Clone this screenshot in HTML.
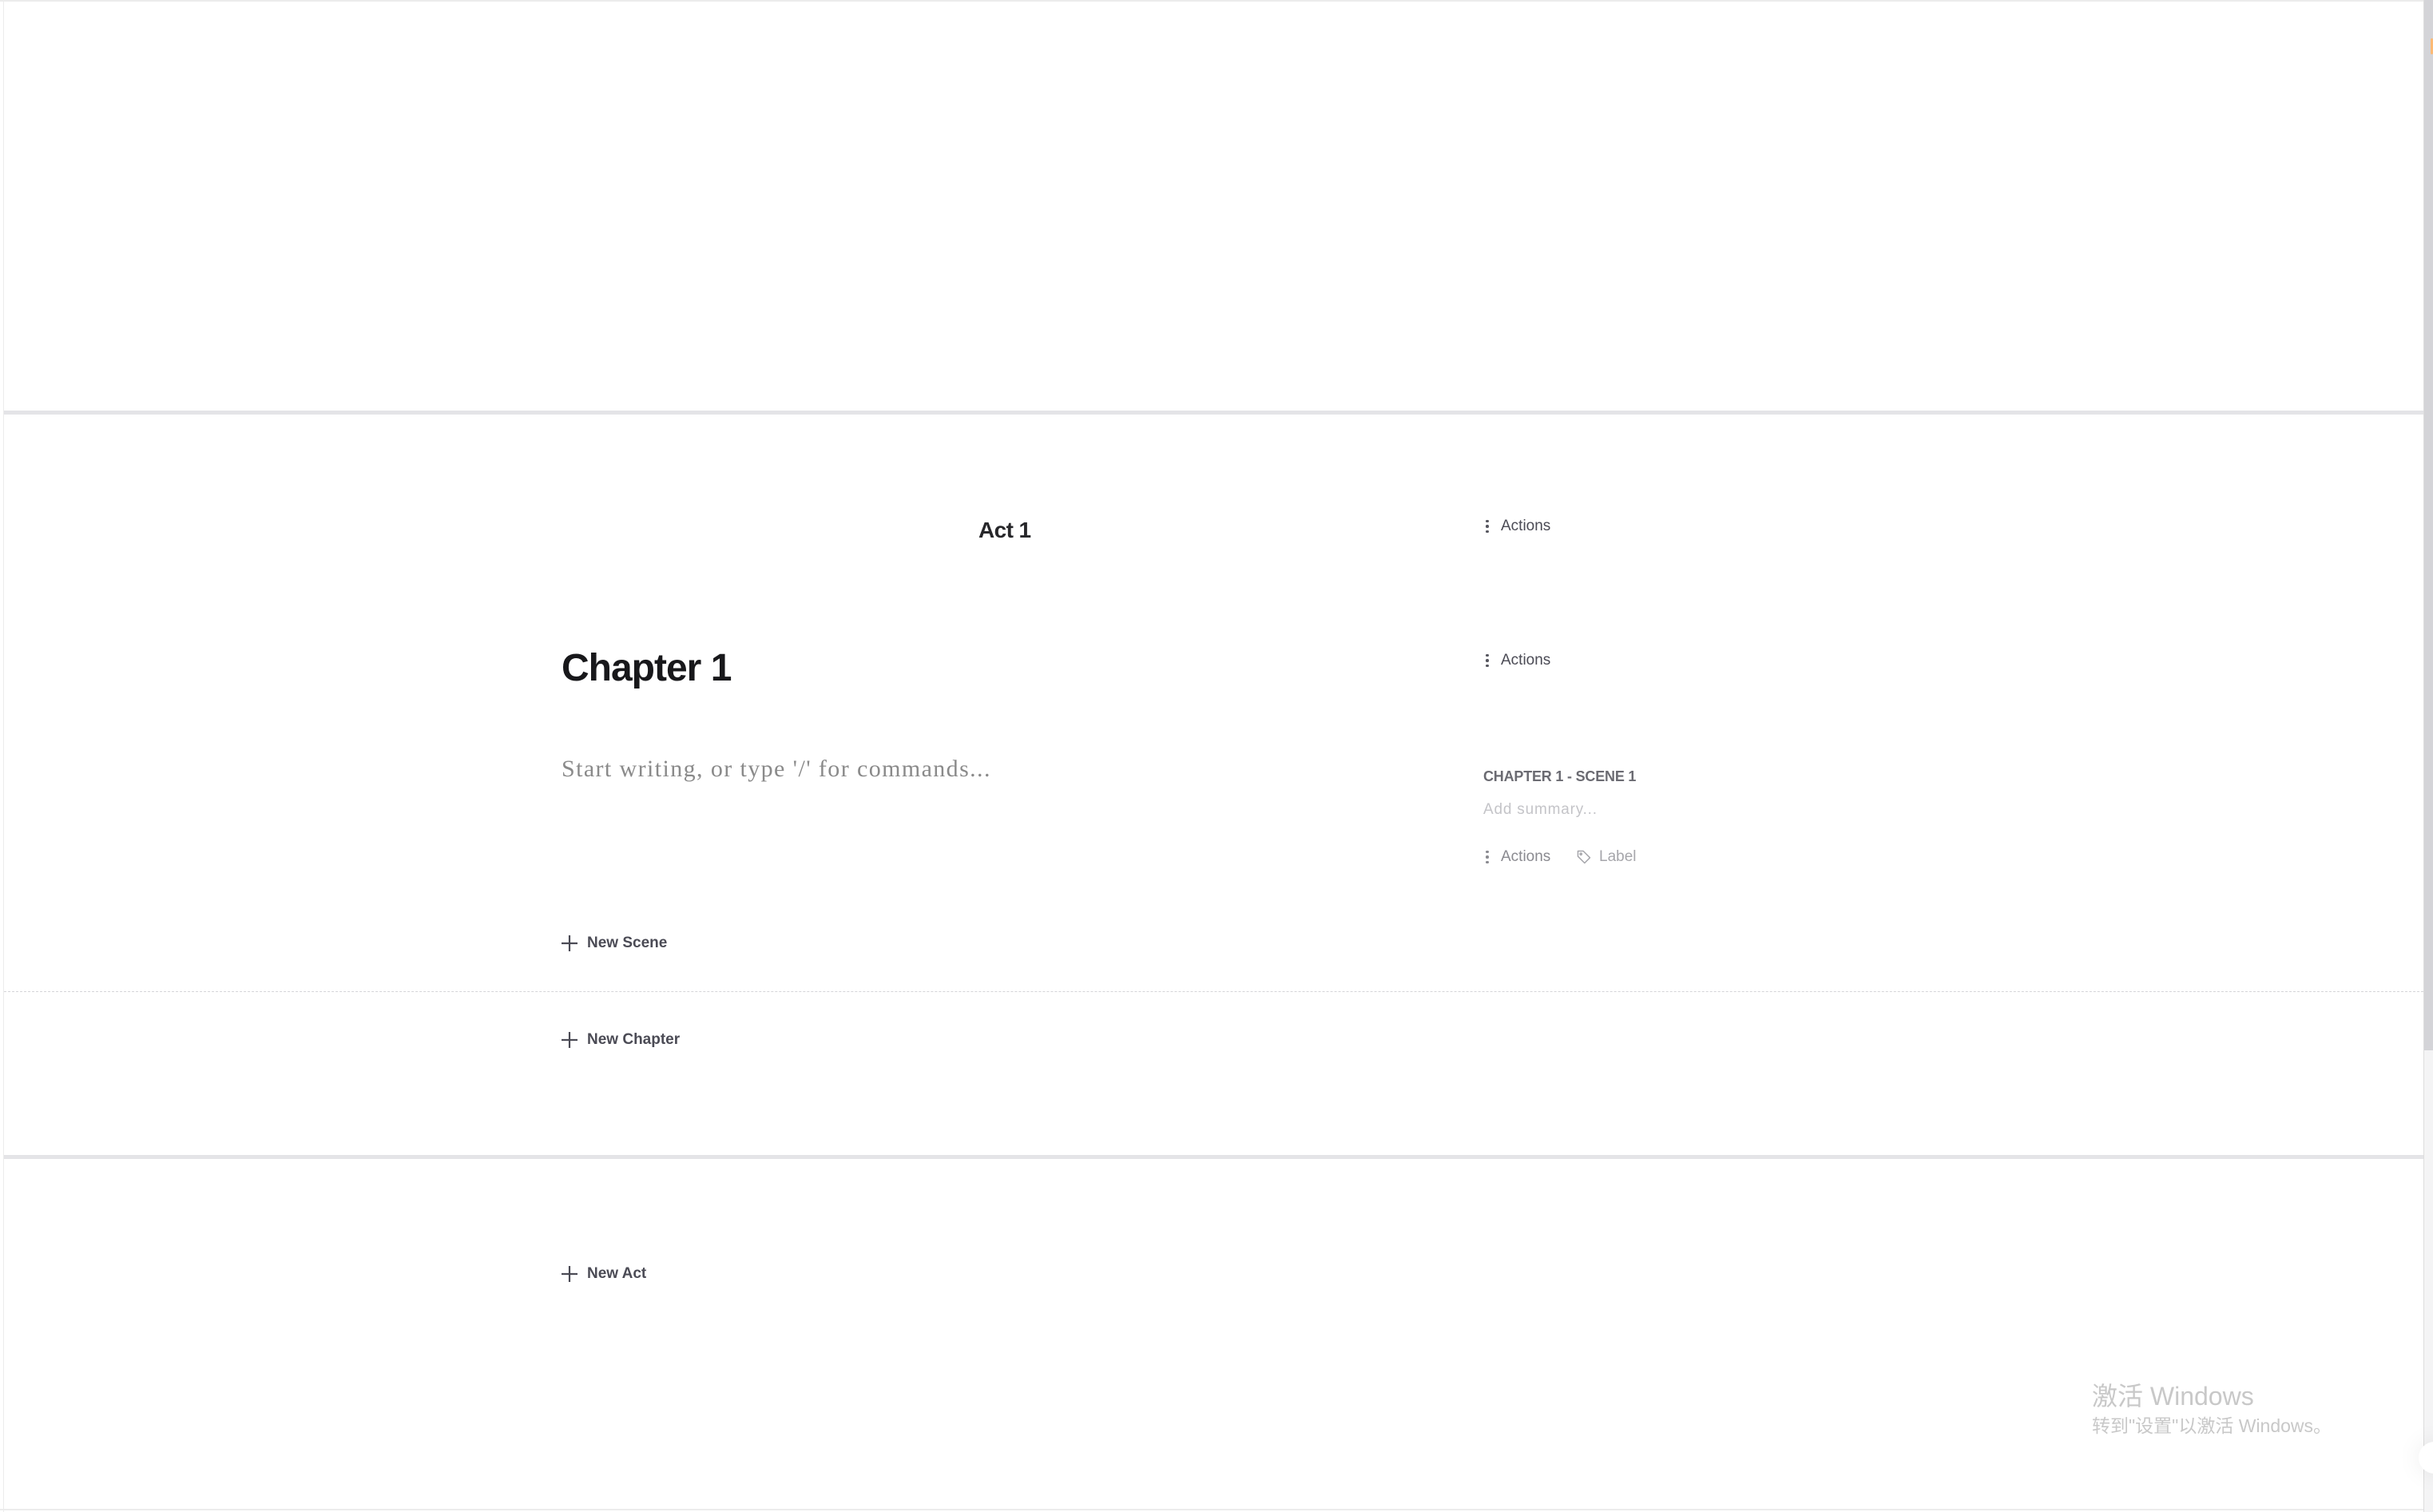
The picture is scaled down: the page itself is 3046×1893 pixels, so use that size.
<!DOCTYPE html>
<html><head><meta charset="utf-8"><style>
html,body{margin:0;padding:0;background:#fff;}
body{width:3046px;height:1893px;position:relative;overflow:hidden;font-family:"Liberation Sans",sans-serif;}
.a{position:absolute;white-space:nowrap;}
.hl{position:absolute;left:5px;width:3029px;height:5px;background:#e4e4e7;}
.act{font-size:19px;color:#4b4b55;display:flex;align-items:center;gap:15px;}
.dots{width:4px;display:flex;flex-direction:column;gap:3px;}
.dots i{display:block;width:3.5px;height:3.5px;border-radius:50%;background:#55555e;}
.add{font-size:19px;font-weight:bold;color:#4b4b55;display:flex;align-items:center;gap:11px;}
</style></head><body>
<div class="a" style="left:0;top:0;width:3034px;height:2px;background:#ececec"></div>
<div class="a" style="left:4px;top:0;width:1px;height:1893px;background:#ececec"></div>
<div class="a" style="left:0;top:1889px;width:3034px;height:2px;background:#ececec"></div>
<div class="hl" style="top:514px"></div>
<div class="hl" style="top:1446px"></div>
<div class="a" style="left:5px;top:1241px;width:3029px;border-top:1px dashed #d4d4d8"></div>
<div class="a" style="left:3034px;top:0;width:12px;height:1893px;background:#f4f4f5;border-left:1px solid #ddd"></div>
<div class="a" style="left:3035px;top:0;width:11px;height:1315px;background:#d4d4d8"></div>
<div class="a" style="left:3043px;top:48px;width:3px;height:20px;background:#fdba74;border-radius:2px"></div>

<div class="a" style="left:1225px;top:648px;font-size:28px;color:#27272a;font-weight:bold;letter-spacing:-0.6px">Act 1</div>
<div class="a act" style="left:1860px;top:648px"><span class="dots"><i></i><i></i><i></i></span>Actions</div>

<div class="a" style="left:703px;top:809px;font-size:48px;font-weight:bold;color:#18181b;letter-spacing:-1px">Chapter 1</div>
<div class="a act" style="left:1860px;top:816px"><span class="dots"><i></i><i></i><i></i></span>Actions</div>

<div class="a" style="left:703px;top:946px;font-size:30px;color:#8a8a8a;font-family:'Liberation Serif',serif;letter-spacing:1.4px">Start writing, or type '/' for commands...</div>

<div class="a" style="left:1857px;top:962px;font-size:18px;font-weight:bold;color:#6b6b72;letter-spacing:-0.2px">CHAPTER 1 - SCENE 1</div>
<div class="a" style="left:1857px;top:1003px;font-size:19px;color:#c4c4c8;letter-spacing:0.8px">Add summary...</div>
<div class="a act" style="left:1860px;top:1062px;color:#8a8a90"><span class="dots"><i style="background:#8a8a90"></i><i style="background:#8a8a90"></i><i style="background:#8a8a90"></i></span>Actions</div>
<div class="a act" style="left:1973px;top:1062px;color:#a6a6ab;gap:9px">
<svg width="20" height="20" viewBox="0 0 24 24" fill="none" stroke="#a6a6ab" stroke-width="1.8" stroke-linejoin="round"><path d="M3 3h8l10 10-8 8L3 11z"/><circle cx="7.5" cy="7.5" r="1.3"/></svg>Label</div>

<div class="a add" style="left:702px;top:1170px"><svg width="22" height="22" viewBox="0 0 22 22" stroke="#4b4b55" stroke-width="2.2"><path d="M11 1v20M1 11h20"/></svg>New Scene</div>
<div class="a add" style="left:702px;top:1291px"><svg width="22" height="22" viewBox="0 0 22 22" stroke="#4b4b55" stroke-width="2.2"><path d="M11 1v20M1 11h20"/></svg>New Chapter</div>
<div class="a add" style="left:702px;top:1584px"><svg width="22" height="22" viewBox="0 0 22 22" stroke="#4b4b55" stroke-width="2.2"><path d="M11 1v20M1 11h20"/></svg>New Act</div>

<div class="a" style="left:2619px;top:1723px;font-size:32px;color:#c8c8c8;font-family:'Liberation Sans','Noto Sans CJK SC',sans-serif">激活 Windows</div>
<div class="a" style="left:2619px;top:1766px;font-size:23px;color:#c8c8c8;font-family:'Liberation Sans','Noto Sans CJK SC',sans-serif">转到"设置"以激活 Windows。</div>
<div class="a" style="left:3028px;top:1805px;width:40px;height:40px;border-radius:50%;background:#fff;box-shadow:0 0 30px rgba(0,0,0,0.08)"></div>
</body></html>
